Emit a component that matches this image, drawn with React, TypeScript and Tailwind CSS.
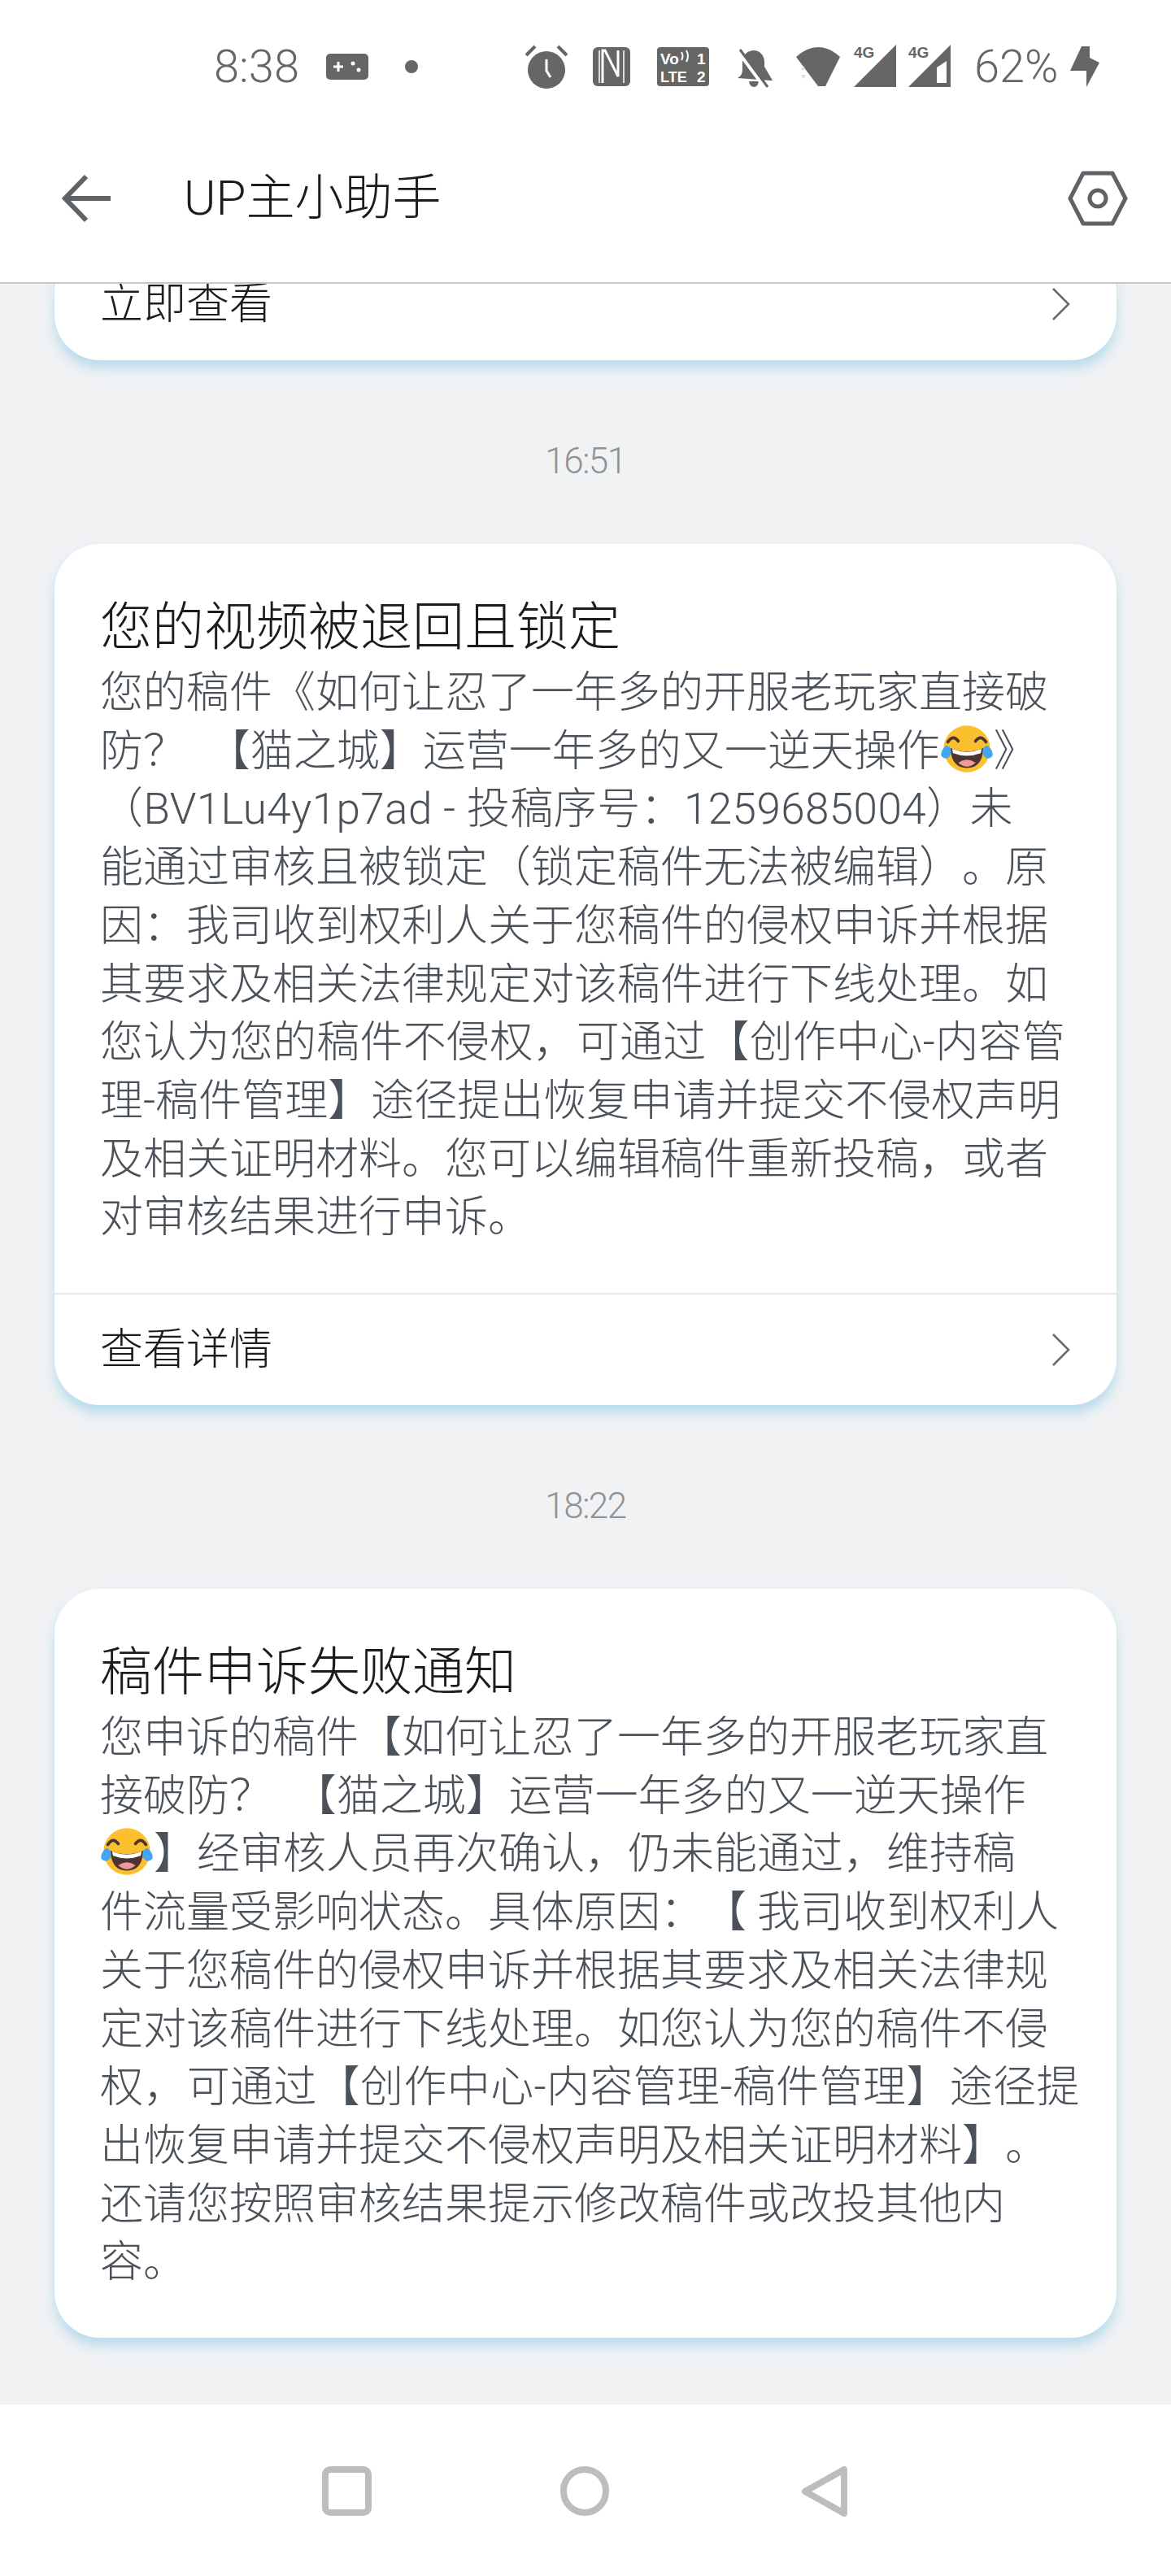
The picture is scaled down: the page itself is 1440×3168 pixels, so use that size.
import type { ReactNode } from 'react'

const CJK = 'font-["Roboto","Noto_Sans_CJK_SC","Noto_Sans",sans-serif]'

function LaughEmoji() {
  return (
    <svg width="66" height="60" viewBox="0 0 62 56" className="inline-block align-[-9px]">
      <circle cx="31" cy="28" r="27" fill="#fbc02d" />
      <path d="M9 20 Q15 11 21 19 M41 19 Q47 11 53 20" fill="none" stroke="#4e342e" strokeWidth="3.5" strokeLinecap="round" />
      <path d="M12 27 Q31 35 50 27 Q49 50 31 50 Q13 50 12 27Z" fill="#4e342e" />
      <path d="M14 28 Q31 35 48 28 L47 33 Q31 39 15 33Z" fill="#fff" />
      <path d="M21 44 Q31 37 41 44 Q31 53 21 44Z" fill="#ef9a9a" />
      <path d="M7 24 Q15 26 12 35 Q8 42 2 37 Q-1 32 7 24Z" fill="#42a5f5" />
      <path d="M55 24 Q47 26 50 35 Q54 42 60 37 Q63 32 55 24Z" fill="#42a5f5" />
    </svg>
  )
}

function Chevron() {
  return (
    <svg width="24" height="40" viewBox="0 0 24 40" fill="none" stroke="#666a6e" strokeWidth="2.5">
      <polyline points="2,1 21,20 2,39" />
    </svg>
  )
}

function StatusBar() {
  return (
    <div className="flex h-[170px] pt-[55px] items-start pl-[263px]">
      <span className="font-['Roboto',sans-serif] font-light text-[56px] leading-[54px] text-[#666]">8:38</span>
      <svg width="52" height="32" viewBox="0 0 52 32" className="ml-[33px] mt-[11px]">
        <rect width="52" height="32" rx="5" fill="#666" />
        <path d="M9 16h12M15 10v12" stroke="#fff" strokeWidth="3" />
        <circle cx="33" cy="12" r="2.5" fill="#fff" />
        <circle cx="40" cy="20" r="2.5" fill="#fff" />
      </svg>
      <div className="w-4 h-4 rounded-full bg-[#666] ml-[45px] mt-[19px]" />
      <svg width="54" height="54" viewBox="0 0 54 54" className="ml-[131px]">
        <circle cx="27" cy="31" r="23" fill="#666" />
        <path d="M27 18v14l5 8" fill="none" stroke="#fff" strokeWidth="3" />
        <path d="M13 2 2 13M41 2l11 11" stroke="#666" strokeWidth="4" />
      </svg>
      <svg width="46" height="48" viewBox="0 0 46 48" className="ml-[30px] mt-[3px]">
        <rect width="46" height="48" rx="6" fill="#666" />
        <path d="M12 44V4h3l16 32V4" fill="none" stroke="#fff" strokeWidth="3" />
        <path d="M8 4v40M38 4v40" stroke="#fff" strokeWidth="1.5" />
      </svg>
      <svg width="64" height="48" viewBox="0 0 64 48" className="ml-[33px] mt-[3px]">
        <rect width="64" height="48" rx="4" fill="#666" />
        <text x="4" y="21" fontFamily="Liberation Sans" fontWeight="700" fontSize="19" fill="#fff">Vo</text>
        <text x="49" y="21" fontFamily="Liberation Sans" fontWeight="700" fontSize="19" fill="#fff">1</text>
        <text x="4" y="43" fontFamily="Liberation Sans" fontWeight="700" fontSize="18" fill="#fff">LTE</text>
        <text x="49" y="43" fontFamily="Liberation Sans" fontWeight="700" fontSize="19" fill="#fff">2</text>
        <path d="M30 6q3 5 0 10M36 4q4 7 0 14" fill="none" stroke="#fff" strokeWidth="2" />
      </svg>
      <svg width="46" height="48" viewBox="0 0 46 48" className="ml-[33px] mt-[5px]">
        <path d="M2 36c5-3 6-6 6-12V17C8 7 15 2 22 2s13 6 13 14v6l10 17-3 0Z" fill="#666" />
        <path d="M16 40h12q-1 7-6 7t-6-7Z" fill="#666" />
        <path d="M2 2 36 48" stroke="#fff" strokeWidth="5" />
        <path d="M5 1l34 46" stroke="#666" strokeWidth="3" />
      </svg>
      <svg width="54" height="50" viewBox="0 0 54 50" className="ml-[28px] mt-[3px]">
        <path d="M0 12Q13 0 27 0T54 12L36 48H32L27 48Z" fill="#666" />
        <path d="M6 28l3-5 3 5ZM6 34l3 5 3-5Z" fill="#ddd" />
      </svg>
      <div className="relative ml-[17px] w-[52px] h-[52px]">
        <svg width="52" height="52" viewBox="0 0 52 52">
          <path d="M52 0V52H0Z" fill="#666" />
        </svg>
        <span className="absolute left-0 top-0 font-['Liberation_Sans',sans-serif] font-bold text-[19px] leading-[20px] text-[#666] bg-white">4G</span>
      </div>
      <div className="relative ml-[15px] w-[52px] h-[52px]">
        <svg width="52" height="52" viewBox="0 0 52 52">
          <path d="M52 0V52H0Z" fill="#666" />
          <path d="M47 20V47H35V28Z" fill="#fff" />
        </svg>
        <span className="absolute left-0 top-0 font-['Liberation_Sans',sans-serif] font-bold text-[19px] leading-[20px] text-[#666] bg-white">4G</span>
      </div>
      <span className="ml-[29px] font-['Roboto',sans-serif] font-light text-[56px] leading-[54px] text-[#666]">62%</span>
      <svg width="36" height="50" viewBox="0 0 36 50" className="ml-[15px] mt-[2px]">
        <path d="M14 0H24V14L36 20 20 50V30H0Z" fill="#666" />
      </svg>
    </div>
  )
}

function Header() {
  return (
    <div className="bg-white border-b-2 border-[#c8c8c8] relative z-10">
      <StatusBar />
      <div className="flex items-center h-[177px] pb-[30px] pl-[76px] pr-[53px]">
        <svg width="60" height="60" viewBox="0 0 60 60" fill="none" stroke="#5f6368" strokeWidth="6">
          <path d="M60 30H6M30 3 4 30l26 27" />
        </svg>
        <div className="ml-[90px] flex-1 text-[60px] leading-[70px] font-light text-[#1c1c1c]">UP主小助手</div>
        <svg width="74" height="68" viewBox="0 0 74 68" fill="none" stroke="#5f6368" strokeWidth="5">
          <path d="M19 3H55L71 34 55 65H19L3 34Z" strokeLinejoin="round" />
          <circle cx="37" cy="34" r="10" />
        </svg>
      </div>
    </div>
  )
}

function Card({ title, lines, action }: { title?: string; lines?: ReactNode[]; action?: string }) {
  return (
    <div className="mx-[67px] bg-white rounded-[56px] shadow-[0_10px_14px_rgba(150,205,232,0.6)]">
      {title && (
        <div className="pl-[56px] pr-[40px] pt-[58px] pb-[56px] font-light [text-spacing-trim:space-all]">
          <div className="text-[64px] leading-[90px] text-[#1c1c1c]">{title}</div>
          {lines?.map((line, i) => (
            <div key={i} className="text-[53px] leading-[71.7px] text-[#4b5158] whitespace-pre">{line}</div>
          ))}
        </div>
      )}
      {action && (
        <div className={`flex items-center justify-between h-[138px] pl-[56px] pr-[56px] ${title ? 'border-t-2 border-[#e6e8ea]' : ''}`}>
          <span className="text-[53px] leading-[60px] font-light text-[#1c1c1c]">{action}</span>
          <Chevron />
        </div>
      )}
    </div>
  )
}

function TimeLabel({ children }: { children: ReactNode }) {
  return (
    <div className="h-[226px] pt-[22px] flex items-center justify-center font-['Roboto',sans-serif] font-light text-[44px] tracking-[-1.5px] text-[#8f9397]">
      {children}
    </div>
  )
}

const CARD_ONE = [
  '您的稿件《如何让忍了一年多的开服老玩家直接破',
  <>防？  【猫之城】运营一年多的又一逆天操作<LaughEmoji />》</>,
  <span className="tracking-[0.4px]">（BV1Lu4y1p7ad - 投稿序号：1259685004）未</span>,
  '能通过审核且被锁定（锁定稿件无法被编辑）。原',
  '因：我司收到权利人关于您稿件的侵权申诉并根据',
  '其要求及相关法律规定对该稿件进行下线处理。如',
  <span className="tracking-[0.25px]">您认为您的稿件不侵权，可通过【创作中心-内容管</span>,
  '理-稿件管理】途径提出恢复申请并提交不侵权声明',
  '及相关证明材料。您可以编辑稿件重新投稿，或者',
  '对审核结果进行申诉。',
]

const CARD_TWO = [
  '您申诉的稿件【如何让忍了一年多的开服老玩家直',
  '接破防？  【猫之城】运营一年多的又一逆天操作',
  <><LaughEmoji />】经审核人员再次确认，仍未能通过，维持稿</>,
  '件流量受影响状态。具体原因：【 我司收到权利人',
  '关于您稿件的侵权申诉并根据其要求及相关法律规',
  '定对该稿件进行下线处理。如您认为您的稿件不侵',
  <span className="tracking-[0.35px]">权，可通过【创作中心-内容管理-稿件管理】途径提</span>,
  '出恢复申请并提交不侵权声明及相关证明材料】。',
  '还请您按照审核结果提示修改稿件或改投其他内',
  '容。',
]

export default function App() {
  return (
    <div className={`w-[1440px] h-[3168px] flex flex-col bg-[#f0f2f4] overflow-hidden ${CJK}`}>
      <Header />
      <div className="flex-1 overflow-hidden">
        <div className="-mt-[44px]">
          <Card action="立即查看" />
        </div>
        <TimeLabel>16:51</TimeLabel>
        <Card title="您的视频被退回且锁定" lines={CARD_ONE} action="查看详情" />
        <TimeLabel>18:22</TimeLabel>
        <Card title="稿件申诉失败通知" lines={CARD_TWO} />
      </div>
      <div className="h-[211px] bg-white flex items-start pt-[76px] relative">
        <div className="ml-[396px] w-[61px] h-[61px] rounded-[10px] border-[8px] border-[#bdbdbd]" />
        <div className="ml-[232px] w-[60px] h-[61px] rounded-full border-[8px] border-[#bdbdbd]" />
        <svg width="56" height="62" viewBox="0 0 56 62" fill="none" stroke="#bdbdbd" strokeWidth="8" strokeLinejoin="round" className="ml-[237px]">
          <path d="M52 4V58L4 31Z" />
        </svg>
      </div>
    </div>
  )
}
